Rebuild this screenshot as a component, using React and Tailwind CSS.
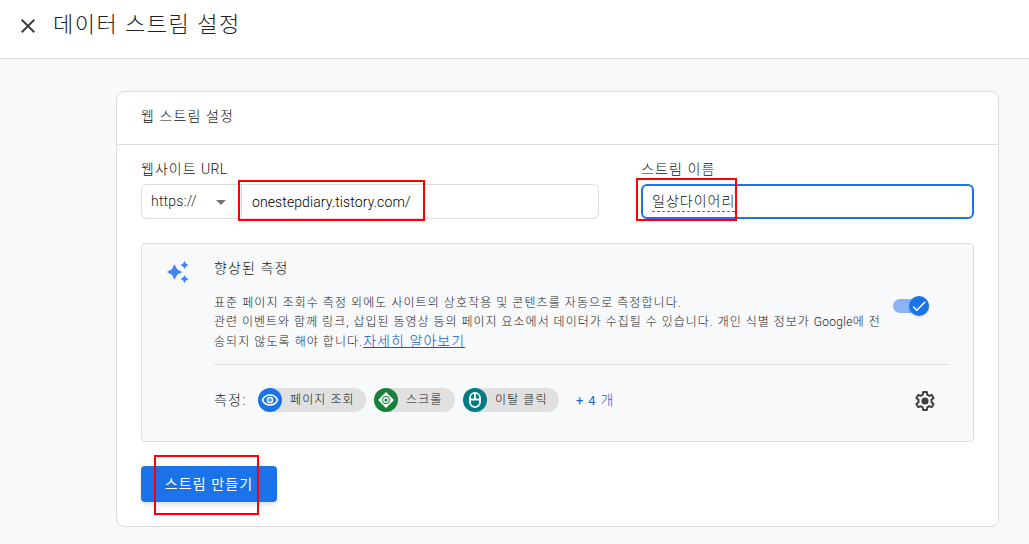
import React, { useState } from 'react';
import { MdClose, MdArrowDropDown, MdCheck } from 'react-icons/md';

const SparkleIcon = () => (
    <svg className="w-6 h-6" viewBox="0 0 24 24" fill="#4285f4">
        <path d="M8.500 4.300l2.700 5 5 2.700-5 2.700-2.700 5-2.700-5-5-2.700 5-2.700z" />
        <path d="M18.500 1l1.400 2.600L22.500 5l-2.600 1.400L18.500 9l-1.400-2.600L14.500 5l2.600-1.400z" />
        <path d="M18.500 15l1.400 2.600 2.600 1.400-2.600 1.400-1.400 2.600-1.400-2.600-2.600-1.400 2.600-1.400z" />
    </svg>
);

const GearIcon = () => (
    <svg className="w-6 h-6" viewBox="0 0 24 24" fill="none">
        <path
            d="M10.2 3h3.6l.5 2.7 1.9 1.1 2.6-.9 1.8 3.1-2.1 1.8v2.4l2.1 1.8-1.8 3.1-2.6-.9-1.9 1.1-.5 2.7h-3.6l-.5-2.7-1.9-1.1-2.6.9L3.4 15l2.1-1.8v-2.4L3.4 9l1.8-3.1 2.6.9 1.9-1.1z"
            stroke="#3c4043"
            strokeWidth="2"
            strokeLinejoin="round"
        />
        <circle cx="12" cy="12" r="3.6" fill="#3c4043" />
    </svg>
);

const EyeIcon = () => (
    <svg className="w-[18px] h-[18px]" viewBox="0 0 18 18" fill="none" stroke="#fff">
        <path d="M1.5 9c1.3-3 4.1-5 7.5-5s6.2 2 7.5 5c-1.3 3-4.1 5-7.5 5s-6.2-2-7.5-5z" strokeWidth="1.7" />
        <circle cx="9" cy="9" r="2.6" strokeWidth="1.5" />
        <circle cx="9" cy="9" r=".7" fill="#fff" stroke="none" />
    </svg>
);

const ScrollIcon = () => (
    <svg className="w-[18px] h-[18px]" viewBox="0 0 18 18">
        <path d="M9 1l8 8-8 8-8-8z" fill="#fff" />
        <circle cx="9" cy="9" r="3.9" fill="#188038" />
        <circle cx="9" cy="9" r="2.9" fill="#fff" />
        <circle cx="9" cy="9" r="1.6" fill="#188038" />
    </svg>
);

const MouseIcon = () => (
    <svg className="w-[18px] h-[18px]" viewBox="0 0 18 18" fill="none" stroke="#fff" strokeWidth="1.8">
        <rect x="4" y="1.9" width="10" height="14.2" rx="5" />
        <path d="M4 8.500h10M9 2v6.500" />
    </svg>
);

const events = [
    { label: '페이지 조회', icon: EyeIcon, color: 'bg-[#1a73e8]', width: 'w-[108px]' },
    { label: '스크롤', icon: ScrollIcon, color: 'bg-[#188038]', width: 'w-[81px]' },
    { label: '이탈 클릭', icon: MouseIcon, color: 'bg-[#007b83]', width: 'w-[96px]' },
];

const App = () => {
    const [url, setUrl] = useState('onestepdiary.tistory.com/');
    const [enhanced, setEnhanced] = useState(true);

    return (
        <div className="w-[1029px] h-[544px] overflow-hidden bg-[#f8f9fa] font-['Roboto','Noto_Sans_CJK_KR',sans-serif] text-sm text-[#111214]">

            {/* Header */}
            <header className="flex items-center h-[59px] pl-4 pb-2 bg-white border-b border-[#dadce0]">
                <MdClose className="w-6 h-6 mt-[1px] text-[#3c4043]" />
                <h1 className="ml-[13px] text-[22px] leading-7 font-light tracking-[1.5px] text-[#202124]">데이터 스트림 설정</h1>
            </header>

            <main className="mt-8 ml-[116px] w-[883px] h-[436px] bg-white border border-[#dadce0] rounded-lg">
                <div className="h-[53px] px-6 flex items-center border-b border-[#dadce0]">
                    <h2 className="font-light tracking-[1.1px] pb-[4px]">웹 스트림 설정</h2>
                </div>

                <div className="px-6 pt-[14px]">
                    <div className="flex gap-[42px]">
                        {/* Website URL */}
                        <div className="w-[458px]">
                            <div className="h-5 leading-5 font-light tracking-[1px]">
                                웹사이트 <span className="tracking-[0.3px]">URL</span>
                            </div>
                            <div className="relative mt-[5px] flex h-[35px] border border-[#dadce0] rounded-md">
                                <div className="w-[100px] flex items-center justify-between pl-[9px] pr-[8px] border-r border-[#dadce0]">
                                    <span className="pb-[1px] font-light tracking-[0.2px] text-[#202124]">https://</span>
                                    <MdArrowDropDown className="w-6 h-6 text-[#757575]" />
                                </div>
                                <input
                                    value={url}
                                    onChange={(e) => setUrl(e.target.value)}
                                    className="flex-1 min-w-0 pl-[10px] pt-[1px] font-light tracking-[0.1px] text-black outline-none bg-transparent"
                                />
                                <div className="absolute -left-[1px] ml-[97px] -top-[5px] w-[187px] h-[41px] border-2 border-[#ff0000] pointer-events-none" />
                            </div>
                        </div>

                        {/* Stream name */}
                        <div className="w-[333px]">
                            <div className="h-5 leading-5 font-light tracking-[1.1px]">스트림 이름</div>
                            <div className="relative mt-[5px] flex items-center h-[35px] pl-[9px] border-2 border-[#1a73e8] rounded-md">
                                <span className="h-[21px] leading-[21px] font-light tracking-[1px] border-b border-dashed border-[#ff2a2a]">일상다이어리</span>
                                <div className="absolute -left-[7px] -top-[8px] w-[101px] h-[43px] border-2 border-[#ff0000] pointer-events-none" />
                            </div>
                        </div>
                    </div>

                    {/* Enhanced measurement */}
                    <section className="mt-6 w-[833px] h-[199px] pl-6 pr-6 bg-[#f8f9fa] border border-[#dadce0] rounded">
                        <div className="flex h-[120px]">
                            <div className="w-[48px] pt-4">
                                <SparkleIcon />
                            </div>
                            <div className="w-[679px] pt-[14px]">
                                <h3 className="leading-5 font-light tracking-[1.1px]">향상된 측정</h3>
                                <div className="mt-[16px] text-xs leading-[19px] font-light text-[#202124] whitespace-nowrap">
                                    <p className="tracking-[1.07px]">표준 페이지 조회수 측정 외에도 사이트의 상호작용 및 콘텐츠를 자동으로 측정합니다.</p>
                                    <p className="tracking-[1px]">
                                        관련 이벤트와 함께 링크, 삽입된 동영상 등의 페이지 요소에서 데이터가 수집될 수 있습니다. 개인 식별 정보가 <span className="tracking-[0.3px]">Google</span>에 전
                                    </p>
                                    <p className="tracking-[1.07px]">
                                        송되지 않도록 해야 합니다.<a href="#" className="text-sm leading-[19px] text-[#1558c0] underline">자세히 알아보기</a>
                                    </p>
                                </div>
                            </div>
                            <button
                                onClick={() => setEnhanced(!enhanced)}
                                className="relative mt-[55px] w-[36px] h-[14px] rounded-full bg-[#8ab4f8]"
                            >
                                <span className="absolute right-0 -top-[3px] flex items-center justify-center w-5 h-5 rounded-full bg-[#1a73e8] shadow">
                                    <MdCheck className="w-[18px] h-[18px] text-white" />
                                </span>
                            </button>
                        </div>

                        <div className="ml-[48px] flex items-center h-[73px] border-t border-[#dadce0]">
                            <span className="w-[44px] pb-[2px] font-light tracking-[1.2px] text-[#202124]">측정:</span>
                            <div className="flex gap-2 pb-[2px]">
                                {events.map(({ label, icon: Icon, color, width }) => (
                                    <div key={label} className={`flex items-center h-6 rounded-full bg-[#e0e0e0] ${width}`}>
                                        <span className={`flex items-center justify-center w-6 h-6 rounded-full ${color}`}>
                                            <Icon />
                                        </span>
                                        <span className="ml-2 text-xs font-light tracking-[1.1px] whitespace-nowrap">{label}</span>
                                    </div>
                                ))}
                            </div>
                            <a href="#" className="ml-[17px] pb-[2px] text-[#1967d2] font-light tracking-[0.8px]">
                                <span className="font-normal text-[13px]">+ 4</span> 개
                            </a>
                            <button className="ml-auto mr-3">
                                <GearIcon />
                            </button>
                        </div>
                    </section>

                    <div className="relative mt-6 w-[136px]">
                        <button className="w-[136px] h-9 pb-[1px] rounded bg-[#1a73e8] text-white font-normal tracking-[1.1px] shadow-md whitespace-nowrap">
                            스트림 만들기
                        </button>
                        <div className="absolute left-[13px] -top-[11px] w-[105px] h-[60px] border-2 border-[#ff0000] pointer-events-none" />
                    </div>
                </div>
            </main>
        </div>
    );
};

export default App;
